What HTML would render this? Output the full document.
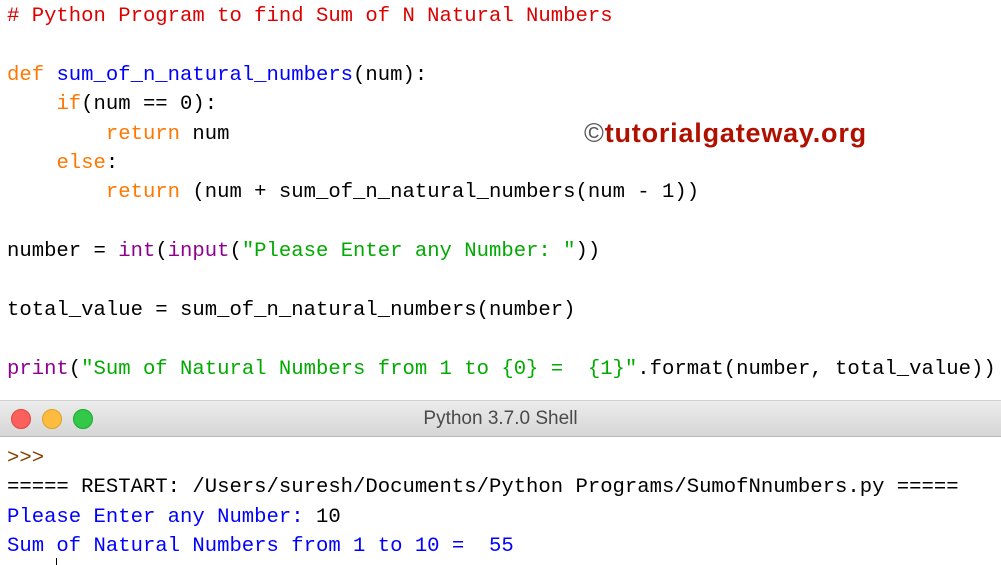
<!DOCTYPE html>
<html><head><meta charset="utf-8"><style>
body{margin:0;width:1001px;height:565px;background:#fff;overflow:hidden;position:relative}
.c{position:absolute;left:7px;font-family:"Liberation Mono",monospace;font-size:20.6px;white-space:pre;color:#000;line-height:29.4px}
.cm{color:#dd0000}.kw{color:#ff7700}.fn{color:#0000ff}.bi{color:#900090}.st{color:#00aa00}.bl{color:#0000ff}.pr{color:#7f3f00}
.bar{position:absolute;left:0;top:400px;width:1001px;height:35px;background:linear-gradient(#ececec,#d6d6d6);border-top:1px solid #cfcfcf;border-bottom:1px solid #b8b8b8}
.d{position:absolute;top:8px;width:18px;height:18px;border-radius:50%}
.t{position:absolute;left:0;width:1001px;text-align:center;top:7px;font-family:"Liberation Sans",sans-serif;font-size:19px;color:#4a4a4a}
.wm{position:absolute;left:584px;top:118px;font-family:"Liberation Sans",sans-serif;font-weight:bold;font-size:27px;color:#b01000;letter-spacing:0.8px}
</style></head><body>
<div class="c" style="top:2px"><span class="cm"># Python Program to find Sum of N Natural Numbers</span>

<span class="kw">def</span> <span class="fn">sum_of_n_natural_numbers</span>(num):
    <span class="kw">if</span>(num == 0):
        <span class="kw">return</span> num
    <span class="kw">else</span>:
        <span class="kw">return</span> (num + sum_of_n_natural_numbers(num - 1))

number = <span class="bi">int</span>(<span class="bi">input</span>(<span class="st">"Please Enter any Number: "</span>))

total_value = sum_of_n_natural_numbers(number)

<span class="bi">print</span>(<span class="st">"Sum of Natural Numbers from 1 to {0} =  {1}"</span>.format(number, total_value))</div>
<div class="wm"><span style="color:#555;font-weight:normal">©</span>tutorialgateway.org</div>
<div class="bar">
<div class="d" style="left:11px;background:#fc605c;border:0.5px solid #e0443e"></div>
<div class="d" style="left:42px;background:#fdbc40;border:0.5px solid #dea123"></div>
<div class="d" style="left:73px;background:#34c84a;border:0.5px solid #1aab29"></div>
<div class="t">Python 3.7.0 Shell</div>
</div>
<div class="c" style="top:444px"><span class="pr">&gt;&gt;&gt;</span>
===== RESTART: /Users/suresh/Documents/Python Programs/SumofNnumbers.py =====
<span class="bl">Please Enter any Number: </span>10
<span class="bl">Sum of Natural Numbers from 1 to 10 =  55</span></div>
<div style="position:absolute;left:56px;top:558px;width:1px;height:7px;background:#000"></div>
</body></html>
